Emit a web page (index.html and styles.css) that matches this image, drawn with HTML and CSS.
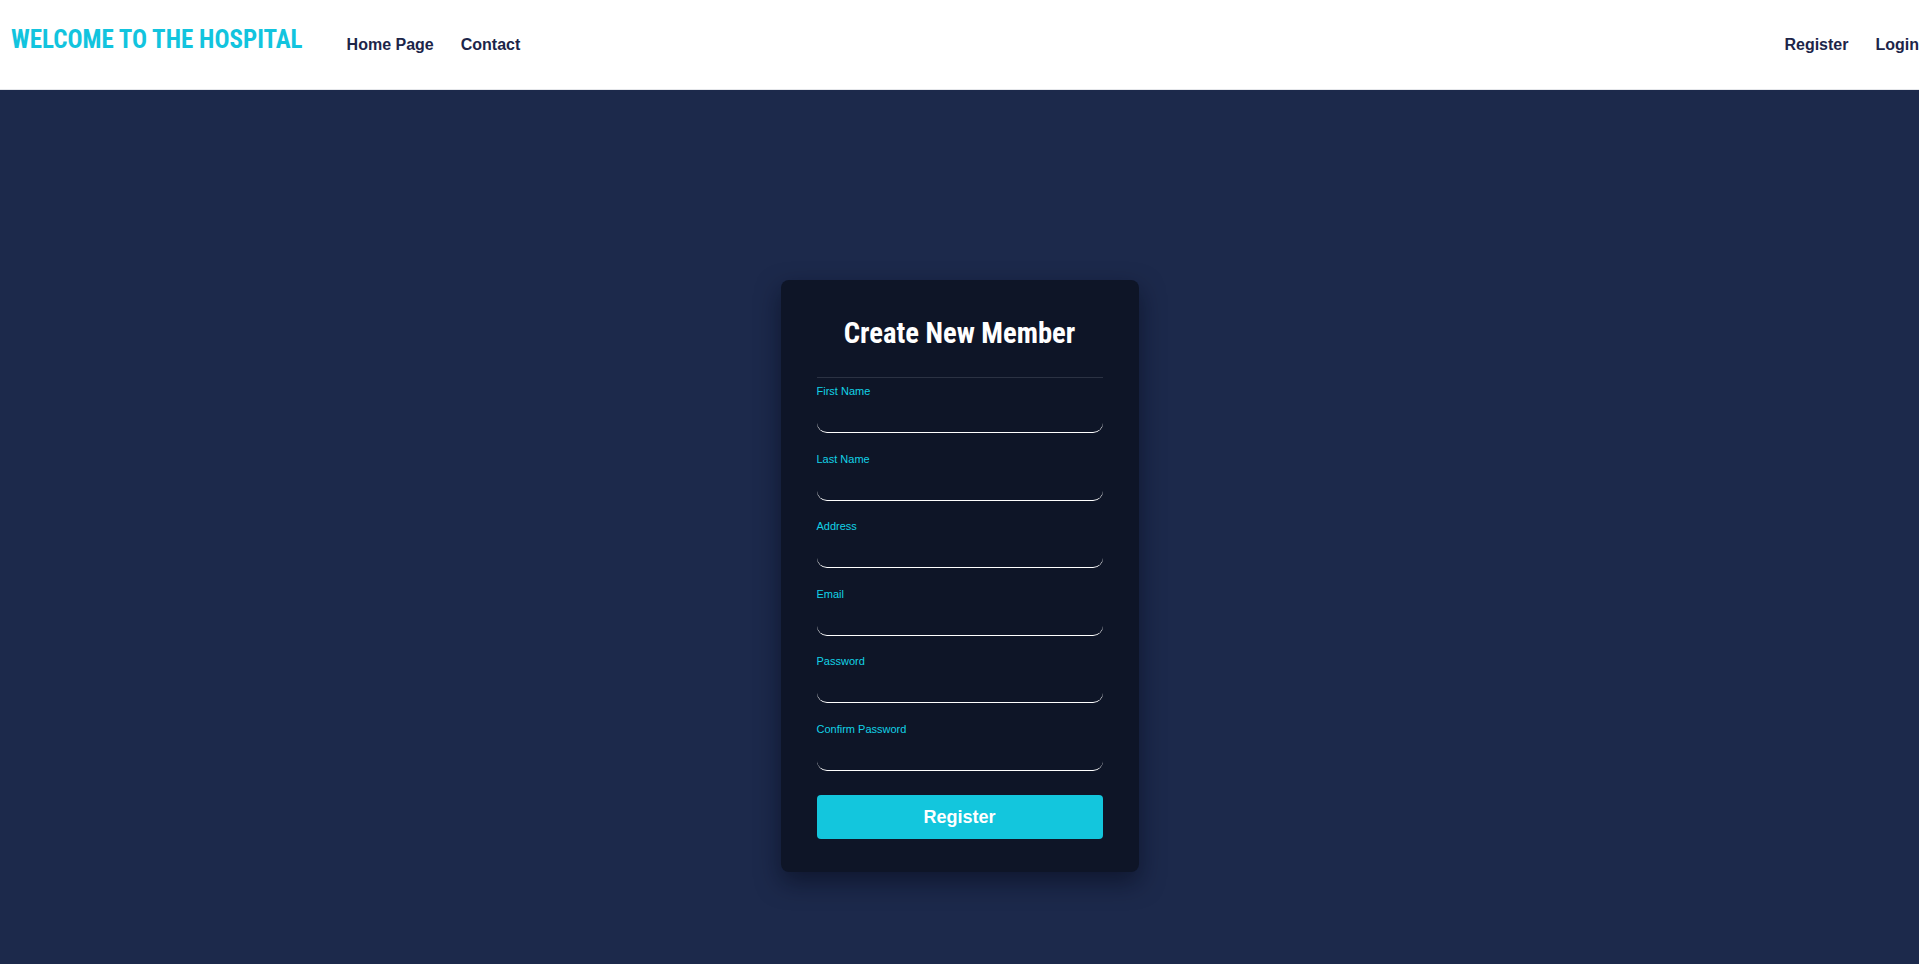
FILE: index.html
```html
<!DOCTYPE html>
<html lang="en">
<head>
<meta charset="utf-8">
<title>Welcome to the Hospital</title>
<link rel="stylesheet" href="styles.css">
</head>
<body>
<header class="topbar">
  <div class="brand">WELCOME TO THE HOSPITAL</div>
  <nav class="nav nav-left">
    <a href="#" class="nav-link">Home Page</a>
    <a href="#" class="nav-link">Contact</a>
  </nav>
  <nav class="nav nav-right">
    <a href="#" class="nav-link">Register</a>
    <a href="#" class="nav-link">Login</a>
  </nav>
</header>
<main class="stage">
  <form class="card">
    <h1 class="card-title">Create New Member</h1>
    <hr class="divider">
    <div class="field">
      <label class="field-label">First Name</label>
      <input class="field-input" type="text">
    </div>
    <div class="field">
      <label class="field-label">Last Name</label>
      <input class="field-input" type="text">
    </div>
    <div class="field">
      <label class="field-label">Address</label>
      <input class="field-input" type="text">
    </div>
    <div class="field">
      <label class="field-label">Email</label>
      <input class="field-input" type="email">
    </div>
    <div class="field">
      <label class="field-label">Password</label>
      <input class="field-input" type="password">
    </div>
    <div class="field">
      <label class="field-label">Confirm Password</label>
      <input class="field-input" type="password">
    </div>
    <button type="button" class="submit">Register</button>
  </form>
</main>
</body>
</html>
```

FILE: styles.css
```css
* { box-sizing: border-box; }
html, body { margin: 0; padding: 0; }
html { overflow-x: hidden; }
body {
  background: #1c294b;
  font-family: "Liberation Sans", Arial, sans-serif;
  min-height: 964px;
}
.topbar {
  height: 90px;
  background: #ffffff;
  border-bottom: 1px solid #e4e6ea;
  display: flex;
  align-items: flex-start;
  padding-left: 11px;
}
.brand {
  font-family: "Roboto Condensed", Roboto, sans-serif;
  font-stretch: condensed;
  font-weight: 700;
  font-size: 25px;
  line-height: 30px;
  color: #12c4de;
  margin-top: 25px;
  white-space: nowrap;
}
.nav {
  display: flex;
  gap: 27px;
  margin-top: 35px;
}
.nav-left { margin-left: 44px; }
.nav-right { margin-left: auto; gap: 27px; }
.nav-link {
  font-weight: 700;
  font-size: 16px;
  line-height: 20px;
  color: #1c2549;
  text-decoration: none;
  white-space: nowrap;
}
.stage {
  display: flex;
  justify-content: center;
  padding-top: 190px;
  padding-bottom: 88px;
}
.card {
  width: 358px;
  background: #0e1527;
  border-radius: 8px;
  padding: 36px 36px 33px;
  box-shadow: 0 10px 25px rgba(5, 10, 25, 0.55);
  display: flex;
  flex-direction: column;
}
.card-title {
  margin: 0;
  text-align: center;
  color: #ffffff;
  font-family: "Roboto Condensed", Roboto, sans-serif;
  font-stretch: condensed;
  font-weight: 700;
  font-size: 28.6px;
  line-height: 34px;
}
.divider {
  border: 0;
  border-top: 1px solid #2b3243;
  margin: 27px 0 7px;
  height: 0;
}
.field {
  display: flex;
  flex-direction: column;
  margin-bottom: 19.5px;
}
.field-label {
  font-size: 11px;
  line-height: 13px;
  color: #12d2e6;
}
.field-input {
  height: 35px;
  background: transparent;
  border: none;
  border-bottom: 1px solid #ffffff;
  border-radius: 10px;
  color: #ffffff;
  outline: none;
  font-size: 13px;
}
.submit {
  margin-top: 5px;
  height: 44px;
  border: none;
  border-radius: 4px;
  background: #13c6dd;
  color: #ffffff;
  font-family: "Liberation Sans", Arial, sans-serif;
  font-weight: 700;
  font-size: 18px;
}
```
